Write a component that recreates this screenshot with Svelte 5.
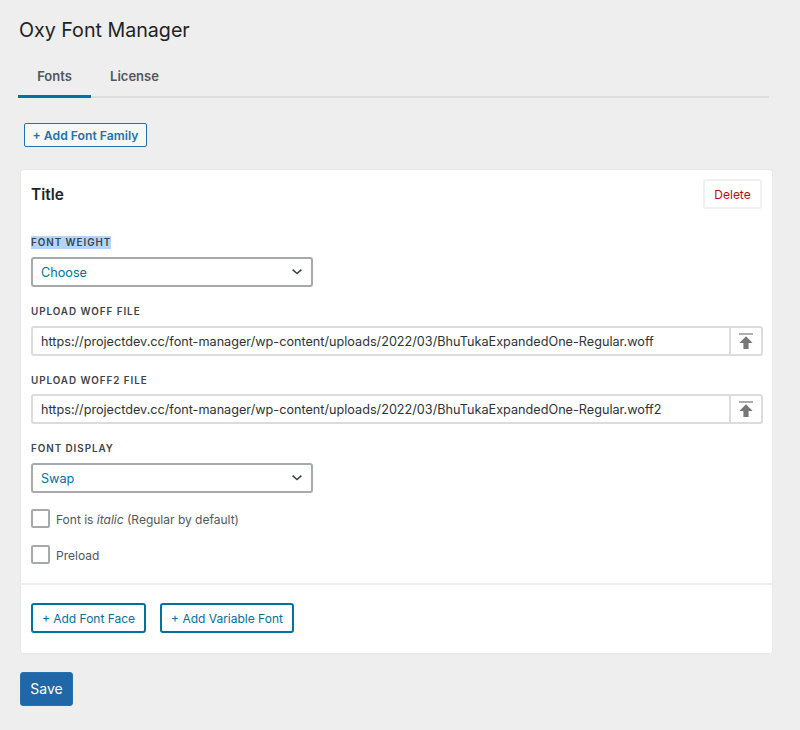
<script>
  const urlFields = [
    { label: 'Upload WOFF file', value: 'https://projectdev.cc/font-manager/wp-content/uploads/2022/03/BhuTukaExpandedOne-Regular.woff' },
    { label: 'Upload WOFF2 file', value: 'https://projectdev.cc/font-manager/wp-content/uploads/2022/03/BhuTukaExpandedOne-Regular.woff2' }
  ];
</script>

{#snippet selectBox(text)}
  <div class="select">
    <span>{text}</span>
    <svg width="12" height="8" viewBox="0 0 12 8" fill="none"><path d="M1.6 1.6 6 5.6l4.4-4" stroke="#3c434a" stroke-width="1.5"/></svg>
  </div>
{/snippet}

<div class="page">
  <h1>Oxy Font Manager</h1>
  <nav class="tabs">
    <span class="tab active">Fonts</span>
    <span class="tab">License</span>
  </nav>
  <button class="add-family">+ Add Font Family</button>

  <section class="card">
    <header class="card-head">
      <h2>Title</h2>
      <button class="delete">Delete</button>
    </header>
    <div class="card-body">
      <div class="field first">
        <div class="label"><span class="selected">Font weight</span></div>
        {@render selectBox('Choose')}
      </div>
      {#each urlFields as f}
        <div class="field wide url-field">
          <div class="label">{f.label}</div>
          <div class="url">
            <span class="url-text">{f.value}</span>
            <span class="upload">
              <svg width="14" height="17" viewBox="0 0 14 17"><path d="M0 1h14" stroke="#777" stroke-width="1.2"/><path d="M7 3.2 13.6 10H9.6v6H4.4v-6H.4z" fill="#777"/></svg>
            </span>
          </div>
        </div>
      {/each}
      <div class="field wide">
        <div class="label">Font display</div>
        {@render selectBox('Swap')}
      </div>
      <label class="check"><span class="box"></span><span class="check-text">Font is <em>italic</em> (Regular by default)</span></label>
      <label class="check"><span class="box"></span><span class="check-text">Preload</span></label>
    </div>
    <footer class="card-foot">
      <button class="outline">+ Add Font Face</button>
      <button class="outline">+ Add Variable Font</button>
    </footer>
  </section>

  <button class="save">Save</button>
</div>

<style>
  :global(body) { margin: 0; background: #eeeeee; }
  .page {
    width: 800px; height: 730px; box-sizing: border-box; overflow: hidden;
    padding: 18px 27px 0 20px;
    font-family: Inter, "Liberation Sans", sans-serif;
    color: #1d2327; background: #eeeeee;
  }
  h1 { margin: 0 0 0 -1px; font-size: 19.65px; line-height: 24px; font-weight: 400; }
  .tabs { display: flex; margin: 12px 4px 0 -2px; border-bottom: 2px solid #dcdcde; height: 44px; box-sizing: border-box; }
  .tab { width: 73px; text-align: center; font-size: 13px; line-height: 44px; font-weight: 600; color: #50575e; height: 44px; box-sizing: border-box; }
  .tab.active { border-bottom: 3px solid #0071a1; width: 73px; }
  .tab + .tab { width: 87px; }
  button { font-family: inherit; cursor: pointer; box-sizing: border-box; }
  .add-family {
    display: block; margin: 25px 0 0 4px; width: 123px; height: 24px; padding: 0;
    border: 1px solid #2271b1; border-radius: 2px; background: #f6f7f7; color: #2271b1;
    font-size: 12.2px; font-weight: 600;
  }
  .card { margin-top: 22px; width: 753px; background: #fff; border-radius: 4px; box-shadow: inset 0 0 0 1px #e8e8e8; }
  .card-head { display: flex; justify-content: space-between; align-items: flex-start; height: 61px; padding: 10px 11px 0; box-sizing: border-box; }
  h2 { margin: 6px 0 0; font-size: 15.4px; font-weight: 600; line-height: 20px; }
  .delete {
    width: 59px; height: 30px; padding: 0; background: #fff; color: #b30f12;
    border: 2px solid #f0f0f0; border-radius: 3px; font-size: 12px;
  }
  .card-body { padding: 0 11px 0; }
  .field { margin-top: 17px; }
  .field.first { margin-top: 6px; }
  .field.wide { margin-top: 18px; }
  .label { font-size: 9.85px; line-height: 13px; font-weight: 600; letter-spacing: 0.95px; text-transform: uppercase; color: #3c434a; }
  .selected { background: #b3d4fc; display: inline-block; }
  .select {
    margin-top: 8px; width: 282px; height: 30px; box-sizing: border-box;
    border: 2px solid #a7aaad; border-radius: 3px; background: #fff;
    display: flex; align-items: center; justify-content: space-between; padding: 0 8px;
    color: #0071a1; font-size: 12.66px;
  }
  .url {
    margin-top: 8px; width: 732px; height: 30px; box-sizing: border-box;
    border: 2px solid #dcdcde; border-radius: 3px; background: #fff;
    display: flex; align-items: center;
  }
  .url-field + .url-field .url { margin-top: 7px; }
  .url-text { flex: 1; padding-left: 8px; font-size: 12.66px; color: #2c3338; white-space: nowrap; }
  .upload { width: 32px; height: 100%; border-left: 2px solid #dcdcde; display: flex; align-items: center; justify-content: center; box-sizing: border-box; }
  .check { display: flex; align-items: center; gap: 6px; margin-top: 16px; font-size: 12px; color: #50575e; }
  .check + .check { margin-top: 17px; }
  .check-text { padding-top: 1px; }
  .box { width: 19px; height: 19px; box-sizing: border-box; border: 2px solid #a7aaad; border-radius: 2px; background: #fff; }
  .card-foot { margin-top: 19px; border-top: 2px solid #eeeeee; padding: 18px 11px 21px; display: flex; gap: 14px; }
  .outline {
    height: 30px; padding: 0; border: 2px solid #0071a1; border-radius: 3px; background: #fff; color: #0071a1;
    font-size: 12px; width: 115px;
  }
  .outline + .outline { width: 134px; }
  .save {
    display: block; margin-top: 18px; width: 53px; height: 34px; padding: 0 0 1px;
    background: #2067a8; border: 1px solid #2271b1; border-radius: 3px; color: #fff; font-size: 14px;
  }
</style>
